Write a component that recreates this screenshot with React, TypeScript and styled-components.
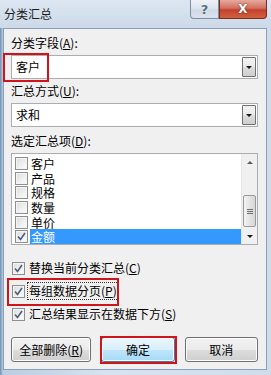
import React from "react";
import styled, { createGlobalStyle } from "styled-components";

const GlobalStyle = createGlobalStyle`
  html, body {
    margin: 0;
    padding: 0;
    background: #dbe6f2;
  }
  body {
    font-family: "Noto Sans CJK SC", "Microsoft YaHei", sans-serif;
    font-size: 12px;
    color: #000;
  }
`;

const Window = styled.div`
  position: relative;
  width: 271px;
  height: 375px;
  display: flex;
  flex-direction: column;
  overflow: hidden;
  background: linear-gradient(90deg, #6f8fb3 0px, #b9cde3 3px, #d7e3f0 40%, #cfdcea 100%);
`;

const TitleBar = styled.div`
  height: 28px;
  display: flex;
  align-items: flex-start;
  padding-left: 4px;
  background: linear-gradient(180deg, #dde7f2 0%, #ccd9e8 100%);
`;

const Title = styled.div`
  margin-top: 7px;
  line-height: 14px;
  color: #1e1e1e;
`;

const Caption = styled.div`
  margin-left: auto;
  margin-right: 4px;
  display: flex;
  height: 19px;
`;

const CaptionButton = styled.div<{ $close?: boolean }>`
  width: ${(p) => (p.$close ? 46 : 27)}px;
  height: 18px;
  display: flex;
  align-items: center;
  justify-content: center;
  font-family: "DejaVu Sans", sans-serif;
  font-weight: bold;
  color: ${(p) => (p.$close ? "#fff" : "#5b6b80")};
  border: 1px solid ${(p) => (p.$close ? "#7a2b22" : "#7d8ea4")};
  border-top: none;
  border-radius: ${(p) => (p.$close ? "0 0 4px 0" : "0 0 0 4px")};
  background: ${(p) =>
    p.$close
      ? "linear-gradient(180deg, #e6a99e 0%, #d3705f 45%, #c3402e 55%, #d2623e 100%)"
      : "linear-gradient(180deg, #eef2f7 0%, #dde5ee 45%, #cfd9e5 55%, #dae3ed 100%)"};
  text-shadow: ${(p) => (p.$close ? "0 0 2px #5a1a12" : "0 0 2px #ffffff")};
  font-size: ${(p) => (p.$close ? 12 : 13)}px;
`;

const Client = styled.div`
  flex: 1;
  margin: 0 4px 5px 3px;
  border: 1px solid #8d9fb5;
  background: #f0f0f0;
  padding: 7px 8px 0 7px;
  display: flex;
  flex-direction: column;
`;

const Label = styled.div<{ $gap?: number }>`
  line-height: 14px;
  height: 14px;
  margin-top: ${(p) => p.$gap ?? 0}px;
  margin-bottom: 5px;
  white-space: nowrap;
`;

const Key = styled.span`
  text-decoration: underline;
  text-underline-offset: 1px;
`;

const Select = styled.div`
  height: 22px;
  border: 1px solid #abadb3;
  background: #fff;
  display: flex;
  align-items: center;
  padding-left: 4px;
  line-height: 14px;
`;

const SelectValue = styled.span`
  flex: 1;
`;

const DropButton = styled.div`
  width: 12px;
  height: 18px;
  margin-right: 1px;
  border: 1px solid #707070;
  border-radius: 1px;
  background: linear-gradient(180deg, #f2f2f2 0%, #ebebeb 50%, #dddddd 51%, #cfcfcf 100%);
  display: flex;
  align-items: center;
  justify-content: center;
`;

const Arrow = styled.div<{ $up?: boolean }>`
  width: 0;
  height: 0;
  border-left: 3px solid transparent;
  border-right: 3px solid transparent;
  ${(p) => (p.$up ? "border-bottom: 3px solid #5a5a5a;" : "border-top: 3px solid #1a1a1a;")}
`;

const ListBox = styled.div`
  height: 90px;
  border: 1px solid #abadb3;
  background: #fff;
  display: flex;
`;

const Items = styled.div`
  flex: 1;
  padding: 2px 0 0 3px;
  display: flex;
  flex-direction: column;
`;

const Item = styled.div`
  height: 15px;
  display: flex;
  align-items: center;
  gap: 2px;
  overflow: hidden;
`;

const ItemText = styled.span<{ $selected?: boolean }>`
  flex: 1;
  height: 15px;
  line-height: 15px;
  padding-left: 1px;
  color: ${(p) => (p.$selected ? "#fff" : "#000")};
  background: ${(p) => (p.$selected ? "#3399ff" : "transparent")};
`;

const Box = styled.div`
  width: 11px;
  height: 11px;
  flex: none;
  border: 1px solid #8e8f8f;
  background: linear-gradient(135deg, #dcdcdc 0%, #f4f4f4 70%, #fcfcfc 100%);
  box-shadow: inset 0 0 0 1px #f4f4f4;
  display: flex;
  align-items: center;
  justify-content: center;
`;

const Scrollbar = styled.div`
  width: 15px;
  background: #f0f0f0;
  border-left: 1px solid #e6e6e6;
  display: flex;
  flex-direction: column;
  align-items: center;
`;

const ScrollArrow = styled.div`
  height: 16px;
  display: flex;
  align-items: center;
  justify-content: center;
`;

const Track = styled.div`
  flex: 1;
  width: 100%;
  display: flex;
  flex-direction: column;
  justify-content: flex-end;
  padding-bottom: 1px;
`;

const Thumb = styled.div`
  height: 30px;
  margin: 0 1px;
  border: 1px solid #9a9a9a;
  border-radius: 2px;
  background: linear-gradient(90deg, #f3f3f3 0%, #e4e4e4 50%, #d6d6d6 100%);
  display: flex;
  flex-direction: column;
  align-items: center;
  justify-content: center;
  gap: 1px;
`;

const Grip = styled.div`
  width: 6px;
  height: 1px;
  background: #6d6d6d;
`;

const Options = styled.div`
  margin-top: 16px;
  display: flex;
  flex-direction: column;
  gap: 9px;
  padding-left: 1px;
`;

const Option = styled.div`
  height: 14px;
  display: flex;
  align-items: center;
  gap: 4px;
  line-height: 14px;
  white-space: nowrap;
`;

const Focused = styled.span`
  outline: 1px dotted #333;
  outline-offset: 1px;
`;

const Buttons = styled.div`
  margin-top: 16px;
  display: flex;
  gap: 10px;
`;

const Button = styled.div<{ $width: number; $default?: boolean }>`
  width: ${(p) => p.$width}px;
  height: 23px;
  border: 1px solid ${(p) => (p.$default ? "#3c7fb1" : "#707070")};
  border-radius: 3px;
  box-shadow: inset 0 0 0 1px #fcfcfc;
  background: ${(p) =>
    p.$default
      ? "linear-gradient(180deg, #eaf6fd 0%, #d9f0fc 50%, #bee6fd 51%, #a7d9f5 100%)"
      : "linear-gradient(180deg, #f2f2f2 0%, #ebebeb 50%, #dddddd 51%, #cfcfcf 100%)"};
  display: flex;
  align-items: center;
  justify-content: center;
  line-height: 14px;
`;

const RedMark = styled.div<{ $x: number; $y: number; $w: number; $h: number }>`
  position: absolute;
  left: ${(p) => p.$x}px;
  top: ${(p) => p.$y}px;
  width: ${(p) => p.$w}px;
  height: ${(p) => p.$h}px;
  border: 2px solid #d0141c;
  box-sizing: border-box;
  pointer-events: none;
`;

function Check({ checked }: { checked?: boolean }) {
  return (
    <Box>
      {checked && (
        <svg width="9" height="9" viewBox="0 0 9 9">
          <path d="M1 4.5 L3.5 7.5 L8 1" fill="none" stroke="#4a5f80" strokeWidth="1.6" />
        </svg>
      )}
    </Box>
  );
}

const fields = ["客户", "产品", "规格", "数量", "单价", "金额"];

export default function App() {
  return (
    <>
      <GlobalStyle />
      <Window>
        <TitleBar>
          <Title>分类汇总</Title>
          <Caption>
            <CaptionButton>?</CaptionButton>
            <CaptionButton $close>X</CaptionButton>
          </Caption>
        </TitleBar>
        <Client>
          <Label>
            分类字段(<Key>A</Key>):
          </Label>
          <Select>
            <SelectValue>客户</SelectValue>
            <DropButton>
              <Arrow />
            </DropButton>
          </Select>
          <Label $gap={5}>
            汇总方式(<Key>U</Key>):
          </Label>
          <Select>
            <SelectValue>求和</SelectValue>
            <DropButton>
              <Arrow />
            </DropButton>
          </Select>
          <Label $gap={7}>
            选定汇总项(<Key>D</Key>):
          </Label>
          <ListBox>
            <Items>
              {fields.map((f, i) => (
                <Item key={f}>
                  <Check checked={i === fields.length - 1} />
                  <ItemText $selected={i === fields.length - 1}>{f}</ItemText>
                </Item>
              ))}
            </Items>
            <Scrollbar>
              <ScrollArrow>
                <Arrow $up />
              </ScrollArrow>
              <Track>
                <Thumb>
                  <Grip />
                  <Grip />
                  <Grip />
                </Thumb>
              </Track>
              <ScrollArrow>
                <Arrow />
              </ScrollArrow>
            </Scrollbar>
          </ListBox>
          <Options>
            <Option>
              <Check checked />
              <span>
                替换当前分类汇总(<Key>C</Key>)
              </span>
            </Option>
            <Option>
              <Check checked />
              <Focused>
                每组数据分页(<Key>P</Key>)
              </Focused>
            </Option>
            <Option>
              <Check checked />
              <span>
                汇总结果显示在数据下方(<Key>S</Key>)
              </span>
            </Option>
          </Options>
          <Buttons>
            <Button $width={80}>
              全部删除(<Key>R</Key>)
            </Button>
            <Button $width={73} $default>
              确定
            </Button>
            <Button $width={73}>取消</Button>
          </Buttons>
        </Client>
        <RedMark $x={3} $y={53} $w={46} $h={29} />
        <RedMark $x={7} $y={278} $w={112} $h={28} />
        <RedMark $x={100} $y={336} $w={77} $h={28} />
      </Window>
    </>
  );
}
